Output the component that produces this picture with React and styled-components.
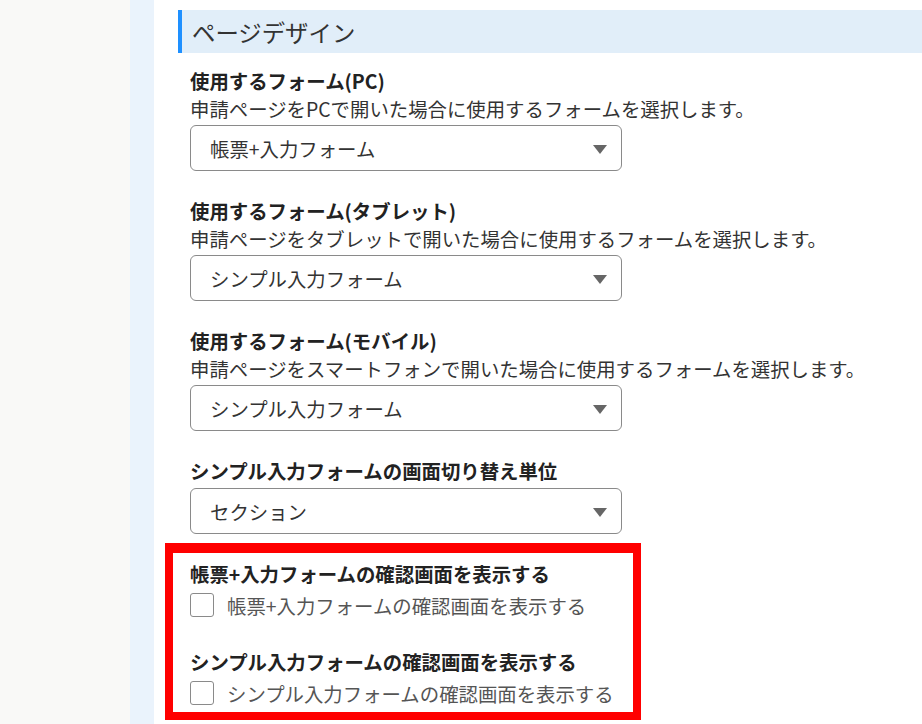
import React from 'react';
import styled, { createGlobalStyle } from 'styled-components';

const GlobalStyle = createGlobalStyle`
  html, body {
    margin: 0;
    padding: 0;
    height: 100%;
    overflow: hidden;
  }
  body {
    font-family: "Noto Sans CJK JP", "Noto Sans", sans-serif;
    color: #222;
    background: #fff;
  }
  #root {
    height: 100%;
  }
`;

const formFields = [
  {
    id: 'pc',
    label: '使用するフォーム(PC)',
    desc: '申請ページをPCで開いた場合に使用するフォームを選択します。',
    value: '帳票+入力フォーム',
  },
  {
    id: 'tablet',
    label: '使用するフォーム(タブレット)',
    desc: '申請ページをタブレットで開いた場合に使用するフォームを選択します。',
    value: 'シンプル入力フォーム',
  },
  {
    id: 'mobile',
    label: '使用するフォーム(モバイル)',
    desc: '申請ページをスマートフォンで開いた場合に使用するフォームを選択します。',
    value: 'シンプル入力フォーム',
  },
  {
    id: 'unit',
    label: 'シンプル入力フォームの画面切り替え単位',
    value: 'セクション',
  },
];

const checkFields = [
  { id: 'confirm-form', label: '帳票+入力フォームの確認画面を表示する' },
  { id: 'confirm-simple', label: 'シンプル入力フォームの確認画面を表示する' },
];

const App = () => {
  return (
    <>
      <GlobalStyle />
      <Page>
        <SideBar />
        <Strip />
        <Main>
          <SectionTitle>ページデザイン</SectionTitle>
          <FieldList>
            {formFields.map(({ id, label, desc, value }) => (
              <Field key={id}>
                <FieldLabel>{label}</FieldLabel>
                {desc && <FieldDesc>{desc}</FieldDesc>}
                <SelectBox hasDesc={!!desc}>
                  <span>{value}</span>
                  <Caret />
                </SelectBox>
              </Field>
            ))}
          </FieldList>
          <Highlight>
            {checkFields.map(({ id, label }) => (
              <CheckField key={id}>
                <FieldLabel>{label}</FieldLabel>
                <CheckRow htmlFor={id}>
                  <HiddenInput type="checkbox" id={id} />
                  <Box />
                  <CheckText>{label}</CheckText>
                </CheckRow>
              </CheckField>
            ))}
          </Highlight>
        </Main>
      </Page>
    </>
  );
};

const Page = styled.div`
  display: flex;
  height: 100%;
  min-height: 724px;
`;

const SideBar = styled.div`
  flex: 0 0 130px;
  background: #f9f9f7;
`;

const Strip = styled.div`
  flex: 0 0 24px;
  background: #eaf3fc;
`;

const Main = styled.main`
  flex: 1;
  min-width: 0;
  padding: 10px 0 0 24px;
`;

const SectionTitle = styled.h2`
  margin: 0;
  height: 43px;
  display: flex;
  align-items: center;
  padding-left: 10px;
  border-left: 4px solid #1e90ff;
  background: #e1eef9;
  font-size: 23.4px;
  font-weight: 400;
  color: #333;
`;

const FieldList = styled.div`
  display: flex;
  flex-direction: column;
  gap: 26px;
  padding: 14px 0 0 12px;
`;

const Field = styled.div`
  display: flex;
  flex-direction: column;
`;

const FieldLabel = styled.div`
  font-size: 19.4px;
  font-weight: 700;
  line-height: 28px;
  color: #222;
  white-space: nowrap;
`;

const FieldDesc = styled.div`
  font-size: 19.4px;
  line-height: 28px;
  color: #333;
  white-space: nowrap;
`;

const SelectBox = styled.div`
  box-sizing: border-box;
  margin-top: ${({ hasDesc }) => (hasDesc ? '2px' : '3px')};
  width: 432px;
  height: 46px;
  display: flex;
  align-items: center;
  justify-content: space-between;
  padding: 0 14px 0 19px;
  border: 1px solid #8a8a8a;
  border-radius: 6px;
  background: #fff;
  font-size: 19.4px;
  color: #333;
`;

const Caret = styled.span`
  width: 0;
  height: 0;
  border-left: 7.5px solid transparent;
  border-right: 7.5px solid transparent;
  border-top: 9px solid #666;
  margin-top: 2px;
`;

const Highlight = styled.div`
  box-sizing: border-box;
  margin: 9px 0 0 -13px;
  width: 476px;
  border: 8px solid #ff0000;
  border-top-width: 10px;
  padding: 7px 0 2px 17px;
  display: flex;
  flex-direction: column;
  gap: 26px;
`;

const CheckField = styled.div`
  display: flex;
  flex-direction: column;
`;

const CheckRow = styled.label`
  height: 34px;
  display: flex;
  align-items: center;
  gap: 13px;
  cursor: pointer;
`;

const HiddenInput = styled.input`
  position: absolute;
  opacity: 0;
  width: 0;
  height: 0;
`;

const Box = styled.span`
  box-sizing: border-box;
  width: 24px;
  height: 24px;
  border: 1px solid #8a8a8a;
  border-radius: 3px;
  background: #fff;
`;

const CheckText = styled.span`
  font-size: 19.4px;
  color: #555;
  white-space: nowrap;
`;

export default App;
